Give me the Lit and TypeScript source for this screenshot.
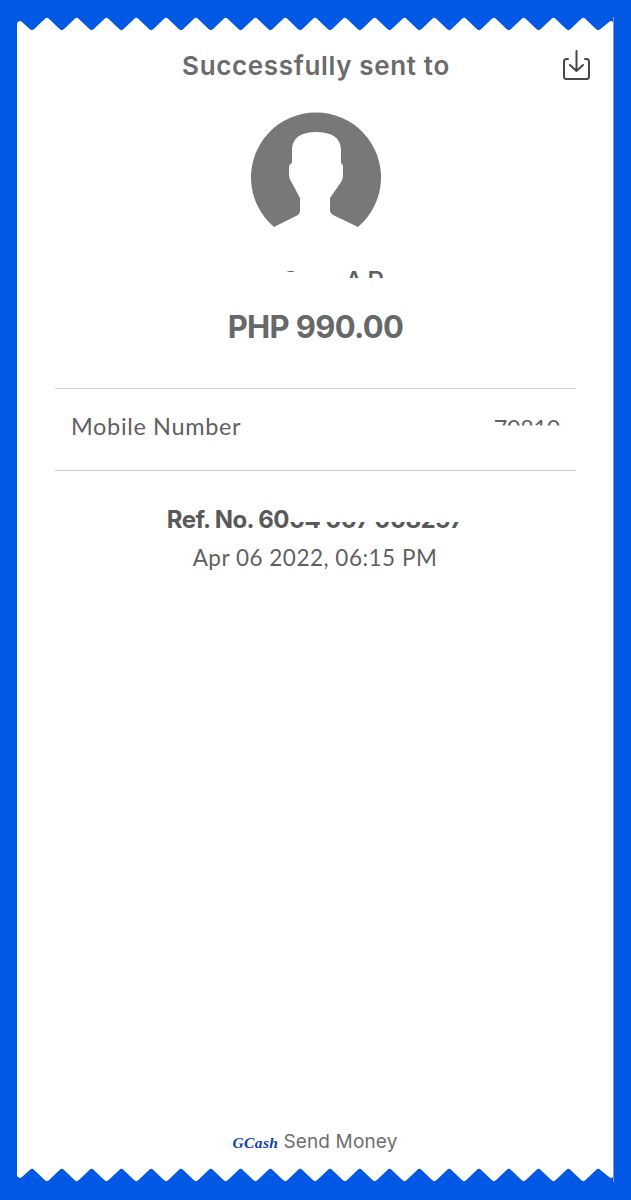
import { LitElement, html, css, svg } from "lit";
import { customElement } from "lit/decorators.js";

const BLUE = "#0158e5";

// zigzag edge of the receipt, drawn in card coordinates, tips softened with curves
function zigzagPath() {
  const tips: [number, number][] = [[594, 3]];
  for (let k = 19; k >= 0; k--) {
    const x = 15 + 29.8 * k;
    tips.push([x, 14.3]);
    if (k > 0) tips.push([x - 14.9, -0.3]);
  }
  tips.push([3, 3]);
  const r = 2.2;
  let d = "M0 0H596V6";
  for (const [x, y] of tips) {
    const dy = y > 7 ? -r : r;
    d += `L${(x + r).toFixed(1)} ${(y + dy).toFixed(1)}Q${x.toFixed(1)} ${y} ${(x - r).toFixed(1)} ${(y + dy).toFixed(1)}`;
  }
  return d + "L0 6Z";
}

const zigzag = (cls: string) => html`
  <svg class="zig ${cls}" width="596" height="14" viewBox="0 0 596 14">
    ${svg`<path d=${zigzagPath()} fill=${BLUE}></path>`}
  </svg>
`;

@customElement("app-root")
export class AppRoot extends LitElement {
  static styles = css`
    :host {
      display: block;
      width: 631px;
      height: 1200px;
      box-sizing: border-box;
      padding: 17px 18px 18px 17px;
      background: #0158e5;
      font-family: "Inter", "Liberation Sans", sans-serif;
      color: #5f6062;
    }
    .card {
      height: 1165px;
      background: #fff;
      display: flex;
      flex-direction: column;
      box-shadow: 1px 0 0 #8d96a8;
    }
    .zig {
      display: block;
      flex: none;
    }
    .flip {
      transform: scaleY(-1);
    }
    .header {
      display: grid;
      grid-template-columns: 1fr auto 1fr;
      align-items: center;
      padding: 0 21px 0 23px;
      margin-top: 16px;
      height: 36px;
    }
    .title {
      grid-column: 2;
      font-size: 26px;
      font-weight: 600;
      letter-spacing: 0.65px;
      color: #6a6b6d;
    }
    .save {
      justify-self: end;
      display: block;
    }
    .avatar {
      display: block;
      margin: 30px 0 0 234px;
      flex: none;
      overflow: visible;
    }
    .name {
      height: 40px;
      margin-top: 32px;
      padding-left: 10px;
      display: flex;
      justify-content: center;
      font-size: 26px;
      font-weight: 500;
      line-height: 40px;
      clip-path: inset(7px 0 23px 0);
      white-space: pre;
    }
    .name .start {
      clip-path: inset(0 0 29px 0);
    }
    .name .end {
      letter-spacing: 4px;
    }
    .hide {
      visibility: hidden;
    }
    .amount {
      text-align: center;
      padding-left: 1px;
      font-size: 31px;
      font-weight: 700;
      letter-spacing: -0.65px;
      line-height: 40px;
      margin-top: 6px;
      color: #67686a;
    }
    .details {
      margin: 41px 37px 0 38px;
      border-top: 1px solid #cfcfcf;
      border-bottom: 1px solid #cfcfcf;
      height: 83px;
      box-sizing: border-box;
      padding: 0 16px 8px;
      display: flex;
      justify-content: space-between;
      align-items: center;
      font-family: "Lato", sans-serif;
      font-size: 23.5px;
      letter-spacing: 0.65px;
    }
    .value {
      margin-top: 4px;
      clip-path: inset(0 0 17px 0);
      line-height: 30px;
      white-space: pre;
      letter-spacing: -0.4px;
    }
    .ref {
      margin-top: 34px;
      text-align: center;
      font-size: 24px;
      font-weight: 700;
      letter-spacing: -0.6px;
      line-height: 30px;
      color: #58595b;
      white-space: pre;
    }
    .ref .faded {
      display: inline-block;
      clip-path: inset(17px 0 0 0);
    }
    .date {
      margin-top: 8px;
      text-align: center;
      font-family: "Lato", sans-serif;
      font-size: 22.5px;
      letter-spacing: 0.5px;
      line-height: 30px;
    }
    .footer {
      margin-top: auto;
      margin-bottom: 12px;
      display: flex;
      justify-content: center;
      align-items: baseline;
      gap: 5px;
      font-size: 19px;
      letter-spacing: 0.15px;
      line-height: 26px;
      color: #6d6e70;
    }
    .brand {
      font-family: "Liberation Serif", serif;
      font-style: italic;
      font-weight: 700;
      font-size: 15.5px;
      letter-spacing: 0.4px;
      color: #123fae;
    }
  `;

  render() {
    return html`
      <div class="card">
        ${zigzag("")}
        <div class="header">
          <div class="title">Successfully sent to</div>
          <svg class="save" width="30" height="32" viewBox="0 0 30 32" fill="none" stroke="#47484a" stroke-width="2" stroke-linecap="round" stroke-linejoin="round">
            <path d="M6 10H4.500A2.500 2.500 0 0 0 2 12.500V27.500A2.500 2.500 0 0 0 4.500 30H24.500A2.500 2.500 0 0 0 27 27.500V12.500A2.500 2.500 0 0 0 24.500 10H23"></path>
            <path d="M14.500 2V22M8 16L14.500 22L21 16"></path>
          </svg>
        </div>
        <svg class="avatar" width="130" height="116" viewBox="0 0 130 116">
          <path fill="#777979" d="M107 114A65 65 0 1 0 23 114L47 102Q49 100 49 98V85L41 70Q38 66 38 62V55Q38 51 41 50V37C41 25 50 19 65 19C81 19 90 25 90 37V50Q92 51 92 55V62Q92 67 88 72L79 85V98Q79 100 82 102Z"></path>
        </svg>
        <div class="name"><span class="hide">J. </span><span class="start">C</span><span class="hide">. G</span><span class="end"> AP</span></div>
        <div class="amount">PHP 990.00</div>
        <div class="details">
          <span>Mobile Number</span>
          <span class="value"><span class="hide">0917 35</span>70810</span>
        </div>
        <div class="ref">Ref. No. 60<span class="faded">04 007 008257</span></div>
        <div class="date">Apr 06 2022, 06:15 PM</div>
        <div class="footer"><span class="brand">GCash</span><span>Send Money</span></div>
        ${zigzag("flip")}
      </div>
    `;
  }
}
